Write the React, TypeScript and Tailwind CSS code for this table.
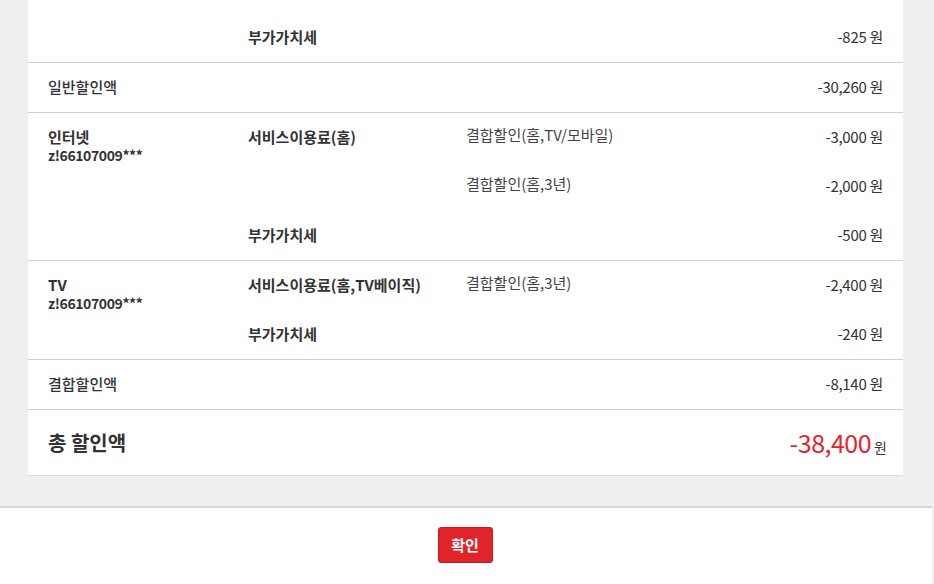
import React from "react";

type Line = { item?: string; detail?: string; amount: string };

const font = { fontFamily: '"Noto Sans CJK KR", "Noto Sans", sans-serif' };

const Account = ({ name }: { name: string }) => (
  <>
    <div className="text-[15px]">{name}</div>
    <div className="text-[14px] tracking-[-0.4px]">z!66107009***</div>
  </>
);

const groups: { label?: React.ReactNode; lines: Line[]; plain?: boolean }[] = [
  { lines: [{ item: "부가가치세", amount: "-825" }] },
  { label: "일반할인액", plain: true, lines: [{ amount: "-30,260" }] },
  {
    label: <Account name="인터넷" />,
    lines: [
      { item: "서비스이용료(홈)", detail: "결합할인(홈,TV/모바일)", amount: "-3,000" },
      { detail: "결합할인(홈,3년)", amount: "-2,000" },
      { item: "부가가치세", amount: "-500" },
    ],
  },
  {
    label: <Account name="TV" />,
    lines: [
      { item: "서비스이용료(홈,TV베이직)", detail: "결합할인(홈,3년)", amount: "-2,400" },
      { item: "부가가치세", amount: "-240" },
    ],
  },
  { label: "결합할인액", plain: true, lines: [{ amount: "-8,140" }] },
];

const Row = ({ line }: { line: Line }) => (
  <div className="flex h-[49px] items-center">
    <div className="w-[218px] shrink-0 text-[15px] font-bold text-[#333]">{line.item}</div>
    <div className="flex-1 -translate-y-[2px] text-[15px] text-[#444]">{line.detail}</div>
    <div className="text-[15px] tracking-[-0.3px] text-[#333]">{line.amount} 원</div>
  </div>
);

export default function App() {
  return (
    <div className="flex h-[584px] flex-col overflow-hidden bg-[#efefef]" style={font}>
      <div className="ml-[28px] mr-[31px] border-b border-[#dddddd] bg-white pt-[13px]">
        {groups.map((g, i) => (
          <div key={i} className="flex border-b border-[#d0d0d0] px-[20px]">
            <div
              className={
                g.plain
                  ? "flex w-[200px] shrink-0 items-center text-[15px] font-medium text-[#333]"
                  : "w-[200px] shrink-0 pt-[15px] font-bold leading-[18px] text-[#333]"
              }
            >
              {g.label}
            </div>
            <div className="flex-1">
              {g.lines.map((l, j) => (
                <Row key={j} line={l} />
              ))}
            </div>
          </div>
        ))}
        <div className="flex h-[65px] items-center justify-between pl-[20px] pr-[16px]">
          <span className="text-[20px] font-bold text-[#333]">총 할인액</span>
          <span className="flex items-baseline gap-[3px]">
            <span className="text-[25px] tracking-[-0.5px] text-[#e3262b]">-38,400</span>
            <span className="text-[14px] text-[#333]">원</span>
          </span>
        </div>
      </div>
      <div className="mt-[30px] mr-[2px] flex flex-1 justify-center border-t-2 border-[#d5d5d5] bg-white pt-[19px]">
        <button className="-ml-[2px] h-[36px] w-[55px] rounded-[3px] border border-[#c51a20] bg-[#e1242a] text-[15px] font-bold text-white">
          확인
        </button>
      </div>
    </div>
  );
}
